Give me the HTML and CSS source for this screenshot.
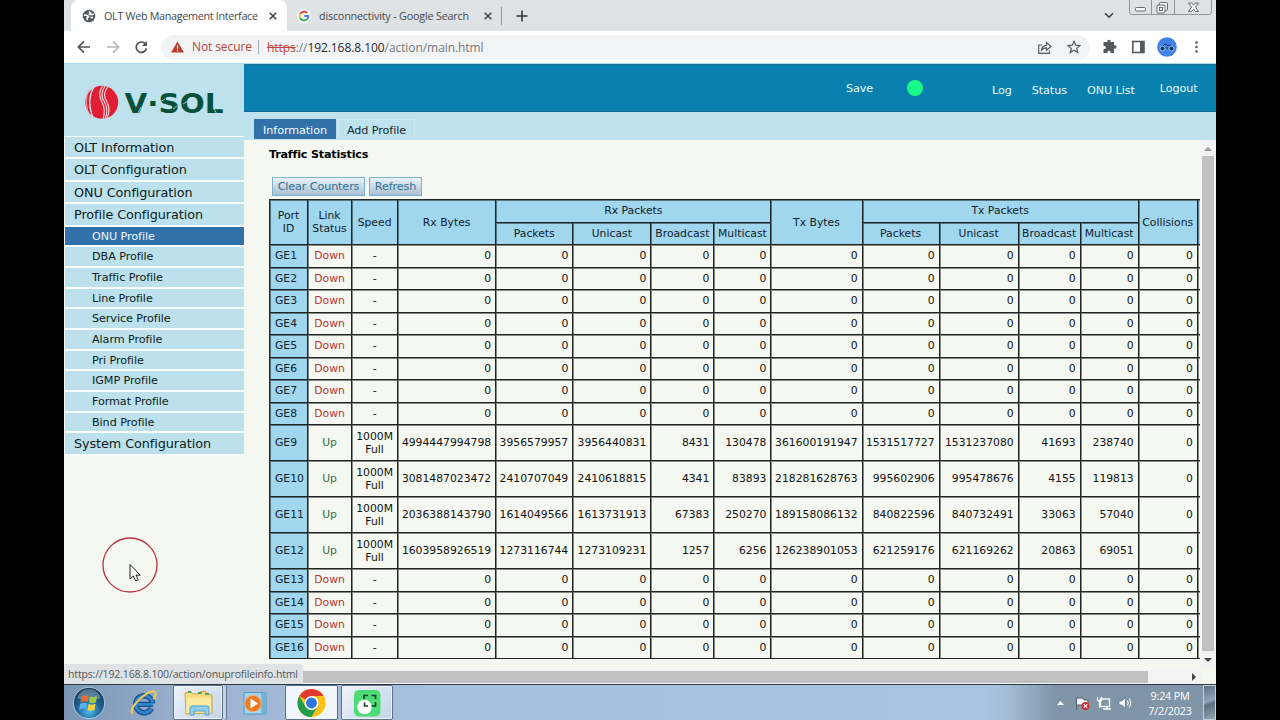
FILE: index.html
```html
<!DOCTYPE html>
<html lang="en">
<head>
  <meta charset="UTF-8">
  <meta name="viewport" content="width=device-width, initial-scale=1.0">
  <title>OLT Web Management Interface</title>
  <link rel="stylesheet" href="styles.css">
</head>
<body>
<div class="screen">

  <!-- Browser tabs -->
  <div class="tab-strip">
    <div class="tab active">
      <svg class="favicon" viewBox="0 0 14 14"><circle cx="7" cy="7" r="6.3" fill="#565b60"/><path d="M2 6 L5 6.500 L6.500 8 L5 9 L5.500 11 M7 2.500 L8.500 4 L7.500 5.500 L10.500 5.500 L12 5 M8.500 8.500 L11 8.500" stroke="#fff" stroke-width="1.500" fill="none"/></svg>
      <span class="tab-title t1">OLT Web Management Interface</span>
      <svg class="close" viewBox="0 0 8 8"><path d="M.7 .7 L7.3 7.3 M7.3 .7 L.7 7.3"/></svg>
    </div>
    <div class="tab">
      <svg class="favicon google" viewBox="0 0 14 14"><circle cx="7" cy="7" r="7" fill="#fff"/><g fill="none" stroke-width="2"><path d="M10.2 4 A4.4 4.4 0 0 0 3.1 5" stroke="#ea4335"/><path d="M3.1 5 A4.4 4.4 0 0 0 3.1 9" stroke="#fbbc05"/><path d="M3.1 9 A4.4 4.4 0 0 0 10 10.3" stroke="#34a853"/><path d="M10 10.3 A4.4 4.4 0 0 0 11.4 7 H7.2" stroke="#4285f4"/></g></svg>
      <span class="tab-title t2">disconnectivity - Google Search</span>
      <svg class="close" viewBox="0 0 8 8"><path d="M.7 .7 L7.3 7.3 M7.3 .7 L.7 7.3"/></svg>
    </div>
    <span class="tab-line"></span>
    <svg class="new-tab" viewBox="0 0 12 12"><path d="M6 .5 V11.5 M.5 6 H11.5"/></svg>
    <svg class="chevron" viewBox="0 0 10 7"><path d="M1 1.2 L5 5.2 L9 1.2"/></svg>
    <svg class="win-buttons" viewBox="0 0 84 16"><path d="M.5 0 V12 Q.5 14.5 3 14.5 H80 Q82.5 14.5 82.5 12 V0 M22.5 0 V14 M45.500 0 V14" fill="none" stroke="#8d949b"/><g fill="#f4f6f7" stroke="#555b61" stroke-width=".9"><rect x="6.500" y="7.500" width="10" height="3.500" rx="1"/><rect x="30.500" y="2.500" width="8" height="8" rx="1"/><rect x="28" y="5" width="8" height="8" rx="1"/><rect x="30.500" y="7.500" width="3" height="3"/><path d="M59.500 3 H62.500 L64.500 5.200 L66.500 3 H69.500 L66.500 7 L69.500 11.500 H66.500 L64.500 9.200 L62.500 11.500 H59.500 L62.500 7 Z"/></g></svg>
  </div>

  <!-- Address bar -->
  <div class="toolbar">
    <svg class="nav-icons" viewBox="0 0 74 14"><g fill="none" stroke-width="1.7"><path d="M13 7 H1.500 M7 1.300 L1.300 7 L7 12.700" stroke="#50555a"/><path d="M30 7 H41.500 M36 1.300 L41.700 7 L36 12.700" stroke="#b5b8bb"/><path d="M68.500 4 A5.200 5.200 0 1 0 69.500 8.300" stroke="#50555a"/></g><path d="M70 1 V6 H65 Z" fill="#50555a"/></svg>
    <div class="address">
      <svg class="warn" viewBox="0 0 14 12"><path d="M7 0 L14 12 H0 Z" fill="#bf3a2b"/><path d="M7 4 V8 M7 9 V10.500" stroke="#fff" stroke-width="1.300"/></svg>
      <span class="not-secure">Not secure</span>
      <span class="url"><span class="strike">https</span><span class="gray">://</span>192.168.8.100<span class="gray">/action/main.html</span></span>
      <svg class="share" viewBox="0 0 14 13"><path d="M4 4 H.7 V12.300 H11.500 V9.500 M3.500 9 Q4 4.500 8.500 4.300 V1.500 L13 5.500 L8.500 9.300 V6.800 Q5.500 6.700 3.500 9 Z"/></svg>
      <svg class="star" viewBox="0 0 14 14"><path d="M7 1.300 L8.700 5.200 L12.900 5.600 L9.700 8.400 L10.700 12.500 L7 10.300 L3.300 12.500 L4.300 8.400 L1.100 5.600 L5.300 5.200 Z"/></svg>
    </div>
    <svg class="tool-icons" viewBox="0 0 110 22"><path d="M7.500 6 H10.500 Q9.800 3.800 12 3.800 Q14.200 3.800 13.500 6 H17 V9.500 Q19.500 8.800 19.500 11 Q19.500 13.200 17 12.500 V17 H13.500 Q14 14.800 12 14.800 Q10 14.800 10.500 17 H6.500 V13 Q9 13.200 9 11.500 Q9 9.500 6.500 10 V6 Z" fill="#54595e"/><rect x="35.800" y="5.500" width="11" height="11" fill="#fff" stroke="#54595e" stroke-width="1.600"/><rect x="43" y="5" width="4.500" height="12" fill="#54595e"/><circle cx="70" cy="11" r="9.800" fill="#3f83ea"/><g fill="#16345e" stroke="#9dd0ff" stroke-width=".9"><circle cx="65.500" cy="12.500" r="2.500"/><circle cx="74.500" cy="12.500" r="2.500"/><path d="M66 10 L68 8 L72 10 L74 8.500 M69 12 H71" fill="none" stroke="#1f3150" stroke-width="1"/></g><g fill="#54595e"><circle cx="99.500" cy="6.500" r="1.300"/><circle cx="99.500" cy="11" r="1.300"/><circle cx="99.500" cy="15.500" r="1.300"/></g></svg>
  </div>

  <!-- OLT page -->
  <div class="page">
    <div class="sidebar">
      <div class="logo">
        <svg viewBox="0 0 180 72">
          <circle cx="37.800" cy="38.300" r="16.500" fill="#e01f34"/>
          <path d="M31 21 Q21 36 30 56" stroke="#bfe2ec" stroke-width="1.500" fill="none"/>
          <path d="M26 22 Q18 38 27 55" stroke="#f3b8c2" stroke-width=".9" fill="none"/>
          <path d="M41 22 Q35 31 40.500 38 Q45 46 41 55 M43.500 23 Q38 31 43 38 Q47 46 43 54 M38.500 22 Q33 30 38 38 Q42 46 39 55" stroke="#f8dce0" stroke-width="1.100" fill="none"/>
          <text x="60.500" y="49" textLength="99" lengthAdjust="spacingAndGlyphs">V·SOL</text>
          <path d="M74 49 L77 43 M96 38 L101 35 M109 45 L113 42 M119 40 L124 37 M136 47 L141 43 M150 45 L153 50" stroke="#bde2ed" stroke-width=".8"/>
        </svg>
      </div>
      <ul class="menu">
        <li>OLT Information</li>
        <li>OLT Configuration</li>
        <li>ONU Configuration</li>
        <li>Profile Configuration</li>
        <li class="sub current">ONU Profile</li>
        <li class="sub">DBA Profile</li>
        <li class="sub">Traffic Profile</li>
        <li class="sub">Line Profile</li>
        <li class="sub">Service Profile</li>
        <li class="sub">Alarm Profile</li>
        <li class="sub">Pri Profile</li>
        <li class="sub">IGMP Profile</li>
        <li class="sub">Format Profile</li>
        <li class="sub">Bind Profile</li>
        <li>System Configuration</li>
      </ul>
    </div>

    <div class="main">
      <div class="banner">
        <span class="save">Save</span>
        <span class="led"></span>
        <span class="link low">Log</span>
        <span class="link low">Status</span>
        <span class="link low">ONU List</span>
        <span class="link logout">Logout</span>
      </div>
      <div class="page-tabs">
        <span class="page-tab selected">Information</span>
        <span class="page-tab">Add Profile</span>
      </div>
      <div class="frame">
        <div class="content">
          <h1>Traffic Statistics</h1>
          <div class="buttons">
            <button class="clear">Clear Counters</button>
            <button class="refresh">Refresh</button>
          </div>
          <table class="stats">
            <colgroup>
              <col class="w38"><col class="w44"><col class="w46"><col class="w98">
              <col class="w77"><col class="w78"><col class="w63"><col class="w57"><col class="w91">
              <col class="w77"><col class="w79"><col class="w62"><col class="w58"><col class="w59"><col class="w77">
            </colgroup>
            <thead>
              <tr>
                <th rowspan="2">Port<br>ID</th>
                <th rowspan="2">Link<br>Status</th>
                <th rowspan="2">Speed</th>
                <th rowspan="2">Rx Bytes</th>
                <th colspan="4">Rx Packets</th>
                <th rowspan="2">Tx Bytes</th>
                <th colspan="4">Tx Packets</th>
                <th rowspan="2">Collisions</th>
                <th rowspan="2"></th>
              </tr>
              <tr>
                <th>Packets</th><th>Unicast</th><th>Broadcast</th><th>Multicast</th>
                <th>Packets</th><th>Unicast</th><th>Broadcast</th><th>Multicast</th>
              </tr>
            </thead>
            <tbody id="ports"></tbody>
          </table>
        </div>
        <div class="vscroll">
          <span class="arrow up"></span>
          <span class="thumb"></span>
          <span class="arrow down"></span>
        </div>
      </div>
      <div class="hscroll">
        <span class="thumb"></span>
        <span class="arrow right"></span>
      </div>
    </div>

    <div class="status-bubble">https://192.168.8.100/action/onuprofileinfo.html</div>
    <svg class="pointer" viewBox="0 0 56 56"><circle cx="28" cy="28" r="27" fill="none" stroke="#b8323f" stroke-width="1.300"/><path d="M28 27.500 V42 L31.300 39 L33.800 44 L36.300 42.800 L34 38.200 H38.300 Z" fill="#fff" stroke="#222" stroke-width="1"/></svg>
  </div>

  <!-- Windows taskbar -->
  <div class="taskbar">
    <div class="task orb">
      <svg viewBox="0 0 34 34"><defs><radialGradient id="orb" cx=".5" cy=".75" r=".7"><stop offset="0" stop-color="#4cc0ee"/><stop offset=".5" stop-color="#21659a"/><stop offset="1" stop-color="#1c3854"/></radialGradient></defs><circle cx="17" cy="17" r="15.800" fill="url(#orb)" stroke="#b6cbdc"/><path d="M5 12 Q9 3 17 3 Q25 3 29 12 Q17 17 5 12" fill="#9fbdd0" opacity=".45"/><path d="M9.500 10.500 Q13 8.500 16.500 10 L15.500 16 Q12 14.500 8.500 16.500 Z" fill="#ee6b2d"/><path d="M18 10.500 Q21.500 12 25 10 L24 16.300 Q20.500 18 17 16.500 Z" fill="#9fcb45"/><path d="M8 18 Q11.500 16 15 17.500 L14 23.500 Q10.500 22 7 24 Z" fill="#54b0ee"/><path d="M16.600 18 Q20 19.500 23.600 17.800 L22.500 24 Q19 25.500 15.600 24 Z" fill="#fdd23f"/></svg>
    </div>
    <div class="task">
      <svg viewBox="0 0 34 34"><path d="M27.500 18.500 H10.500 M27 17.500 A9.300 9.300 0 1 0 25.800 23" fill="none" stroke="#174f92" stroke-width="6"/><path d="M27.500 18.500 H10.500 M27 17 A9.300 9.300 0 1 0 25.800 23" fill="none" stroke="#2f86cc" stroke-width="3"/><path d="M5 29 Q1 24 13 12.500 Q28 0 30 6 Q31 8 28 13" fill="none" stroke="#f1ca55" stroke-width="2.300"/></svg>
    </div>
    <div class="task open">
      <svg viewBox="0 0 34 34"><path d="M4 7 L9 5 L12 8 H18 L20 5.500 H25 L27 8 L31 9 V27 L5 28 Z" fill="#f5dc7d" stroke="#c9a449"/><path d="M5 12 H30 V27 H5 Z" fill="#faeaa0"/><path d="M7 6 H10 M17 7 H21 M24 8 H28" stroke="#55a05b" stroke-width="2"/><path d="M9 29 V22 Q9 20 11 20 H26 Q28 20 28 22 V29 H24 V25 H13 V29 Z" fill="#8cd0ef" stroke="#569dc5"/></svg>
    </div>
    <div class="task wmp">
      <svg viewBox="0 0 34 34"><path d="M12 7 H29 V28 H12 Z" fill="#9bcbe7" stroke="#539cc4"/><path d="M7 6.500 H25 V28 H7 Z" fill="#a5d4ee" stroke="#529dc8"/><path d="M27 8 V27" stroke="#4d91ba"/><circle cx="16" cy="17.500" r="8.200" fill="#ed7926" stroke="#f6b06c"/><path d="M13.500 12.500 L21 17.500 L13.500 22.500 Z" fill="#fff"/></svg>
    </div>
    <div class="task open chrome">
      <svg viewBox="0 0 34 34"><circle cx="17" cy="17" r="14.500" fill="#fbc116"/><path d="M17 17 L4.450 9.750 A14.500 14.500 0 0 1 29.550 9.750 H17 Z" fill="#e33b2e"/><path d="M4.450 9.750 A14.500 14.500 0 0 0 17 31.500 L23.300 20.600 L17 17 L10.700 20.600 Z" fill="#259b4a"/><circle cx="17" cy="17" r="7.200" fill="#fff"/><circle cx="17" cy="17" r="5.600" fill="#2f74df"/></svg>
    </div>
    <div class="task open recorder">
      <svg viewBox="0 0 34 34"><rect x="4" y="4" width="26.500" height="26.500" rx="5" fill="#4cdb74"/><circle cx="14.500" cy="21" r="7.300" fill="#fff"/><path d="M14 13 V9.500 H18 M21.500 9.500 H25.500 V13 M25.500 16 V20 H21.500 M18 20 H14.500 V16.500" fill="none" stroke="#174825" stroke-width="1.700"/></svg>
    </div>
    <div class="tray">
      <svg class="tray-icons" viewBox="0 0 80 18"><path d="M1 11 L4.500 7 L8 11 Z" fill="#fff"/><path d="M20.500 3 V16 M21 4 H27 L28 6 H32 V11 H21" fill="#f2f5f7" stroke="#52606c"/><circle cx="29.500" cy="12" r="3.900" fill="#cc2f2d"/><path d="M27.800 10.300 L31.200 13.700 M31.200 10.300 L27.800 13.700" stroke="#fff" stroke-width="1.200"/><rect x="44.500" y="5" width="9" height="7.500" fill="#8295a3" stroke="#fff" stroke-width="1.300"/><path d="M47 15 H55 M51 12.500 V15 M41.500 3 V6 Q43.500 8 45.500 6 V3 M43.500 7 V14" stroke="#fff" stroke-width="1.300" fill="none"/><path d="M63 7 H66 L69.500 3.500 V14.500 L66 11 H63 Z" fill="#fff" stroke="#637482" stroke-width=".7"/><path d="M71.500 6.500 Q73 9 71.500 11.500 M73.500 4.500 Q76 9 73.500 13.500" fill="none" stroke="#fff"/></svg>
      <div class="clock"><span>9:24 PM</span><span>7/2/2023</span></div>
      <span class="show-desktop"></span>
    </div>
  </div>
</div>

<script>
  // speed, rx bytes, rx packets x4, tx bytes, tx packets x4 for the ports that are up
  const upPorts = {
    9: [4994447994798, 3956579957, 3956440831, 8431, 130478, 361600191947, 1531517727, 1531237080, 41693, 238740, 0],
    10: [3081487023472, 2410707049, 2410618815, 4341, 83893, 218281628763, 995602906, 995478676, 4155, 119813, 0],
    11: [2036388143790, 1614049566, 1613731913, 67383, 250270, 189158086132, 840822596, 840732491, 33063, 57040, 0],
    12: [1603958926519, 1273116744, 1273109231, 1257, 6256, 126238901053, 621259176, 621169262, 20863, 69051, 0]
  };

  let rows = "";
  for (let i = 1; i <= 16; i++) {
    const up = upPorts[i];
    const values = up || Array(11).fill(0);
    rows += `<tr class="${up ? "tall" : ""}"><th class="port">GE${i}</th>`;
    rows += up ? `<td class="mid up-link">Up</td><td class="mid">1000M<br>Full</td>`
               : `<td class="mid down-link">Down</td><td class="mid">-</td>`;
    rows += values.map(v => `<td>${v}</td>`).join("") + "<td></td></tr>";
  }
  document.getElementById("ports").innerHTML = rows;
</script>
</body>
</html>
```
FILE: styles.css
```css
* {
  box-sizing: border-box;
}

body {
  margin: 0;
  background: #000;
  overflow: hidden;
  font-family: "DejaVu Sans", Verdana, sans-serif;
}

svg {
  display: block;
  flex: none;
}

.screen {
  width: 1152px;
  height: 720px;
  margin: 0 auto;
  display: flex;
  flex-direction: column;
  overflow: hidden;
}

/* Browser tabs */
.tab-strip {
  height: 31px;
  flex: none;
  display: flex;
  align-items: center;
  background: #dee2e5;
  padding-left: 7px;
  font-family: "Open Sans", sans-serif;
  font-size: 10.800px;
  color: #43484d;
}

.tab {
  display: flex;
  align-items: center;
  height: 31px;
  width: 209px;
  padding-left: 10px;
}

.tab.active {
  width: 216px;
  padding-left: 11px;
  background: #fff;
  border-radius: 8px 8px 0 0;
}

.favicon {
  width: 14px;
  height: 14px;
  margin-right: 8px;
}

.tab-title {
  white-space: nowrap;
  width: 165px;
  letter-spacing: -0.2px;
}

.t1 {
  letter-spacing: -0.32px;
}

.close {
  width: 8px;
  height: 8px;
}

.close path {
  stroke: #3c4043;
  stroke-width: 1.5;
}

.tab-line {
  width: 1px;
  height: 18px;
  background: #8d9296;
  margin-left: 5px;
  margin-right: 14px;
}

.new-tab {
  width: 12px;
  height: 12px;
}

.new-tab path {
  stroke: #33373b;
  stroke-width: 1.6;
}

.chevron {
  width: 10px;
  height: 7px;
  margin-left: auto;
  margin-right: 15px;
}

.chevron path {
  fill: none;
  stroke: #3c4043;
  stroke-width: 1.6;
}

.win-buttons {
  width: 84px;
  height: 16px;
  align-self: flex-start;
  margin-right: 3px;
}

/* Address bar */
.toolbar {
  height: 33px;
  flex: none;
  display: flex;
  align-items: center;
  background: #fff;
  border-bottom: 1px solid #a5dfee;
  padding-left: 13px;
  font-family: "Open Sans", sans-serif;
  font-size: 12px;
}

.nav-icons {
  width: 74px;
  height: 14px;
}

.address {
  width: 929px;
  height: 25px;
  margin-left: 10px;
  border-radius: 13px;
  background: #f1f3f4;
  display: flex;
  align-items: center;
  padding: 0 9px 0 10px;
}

.warn {
  width: 13px;
  height: 12px;
}

.not-secure {
  color: #b6483c;
  margin-left: 8px;
  width: 67px;
  height: 14px;
  line-height: 13px;
  letter-spacing: -0.1px;
  white-space: nowrap;
  border-right: 1px solid #a6aaad;
}

.url {
  margin-left: 8px;
  color: #26292c;
  letter-spacing: -0.07px;
  white-space: nowrap;
}

.strike {
  color: #c5453a;
  text-decoration: line-through;
}

.gray {
  color: #73777b;
}

.share {
  width: 14px;
  height: 13px;
  margin-left: auto;
  margin-right: 15px;
}

.star {
  width: 14px;
  height: 14px;
}

.share path,
.star path {
  fill: none;
  stroke: #54595e;
  stroke-width: 1.2;
}

.tool-icons {
  width: 110px;
  height: 22px;
  margin-left: 7px;
}

/* OLT page */
.page {
  position: relative;
  flex: none;
  height: 620px;
  display: flex;
  background: #f4f8f0;
}

.sidebar {
  width: 180px;
  flex: none;
}

.logo {
  height: 72.500px;
  background: #bde2ed;
  border-bottom: 1px solid #f8fcfb;
}

.logo svg {
  width: 180px;
  height: 72px;
}

.logo text {
  font-family: "DejaVu Sans", sans-serif;
  font-weight: bold;
  font-size: 27px;
  fill: #06513c;
}

.menu {
  list-style: none;
  margin: 0;
  padding: 0 0 0 1px;
}

.menu li {
  height: 22.500px;
  line-height: 21.600px;
  padding-left: 9px;
  background: #bce1ec;
  border-bottom: 2px solid #f8fcfb;
  font-size: 12.800px;
  letter-spacing: -0.08px;
  color: #0c1c20;
  white-space: nowrap;
}

.menu .sub {
  height: 20.700px;
  line-height: 19.600px;
  padding-left: 27px;
  font-size: 11.200px;
}

.menu .current {
  background: #3371ab;
  color: #eef8fc;
}

.main {
  flex: 1;
  min-width: 0;
  display: flex;
  flex-direction: column;
}

.banner {
  height: 48px;
  flex: none;
  display: flex;
  background: #0a80ae;
  border-top: 1px solid #1a7294;
  border-bottom: 1px solid #0b6f99;
  color: #e6fbfd;
  font-size: 11.200px;
  letter-spacing: -0.08px;
  line-height: 14px;
  white-space: nowrap;
  padding-top: 17px;
}

.save {
  width: 61px;
  margin-left: 602px;
}

.led {
  width: 16px;
  height: 16px;
  margin: -2px 69px 0 0;
  border-radius: 50%;
  background: #16fb85;
}

.link {
  margin-right: 20px;
}

.low {
  padding-top: 2px;
}

.logout {
  margin: 0 0 0 5px;
}

.page-tabs {
  height: 28px;
  flex: none;
  display: flex;
  background: #bee3ee;
  padding: 7px 0 0 10px;
  gap: 2px;
  font-size: 11.200px;
  letter-spacing: -0.08px;
  line-height: 21px;
}

.page-tab {
  width: 77px;
  height: 20px;
  text-align: center;
  white-space: nowrap;
  border: 1px solid #cdeaf0;
  border-bottom: none;
  color: #14262e;
}

.page-tab.selected {
  width: 82px;
  border-color: #3371ab;
  background: #3371ab;
  color: #f0fbfd;
}

.frame {
  flex: 1;
  min-height: 0;
  display: flex;
  justify-content: space-between;
}

.content {
  width: 956px;
  padding: 7px 0 0 25px;
  overflow: hidden;
}

.content h1 {
  margin: 0;
  font-size: 11.200px;
  line-height: 15px;
  letter-spacing: -0.2px;
  color: #000;
}

.buttons {
  display: flex;
  gap: 4px;
  padding: 15px 0 3px 3px;
}

.buttons button {
  height: 19px;
  padding: 0;
  border: 1px solid #7bb0cf;
  background: linear-gradient(#e9f2f6, #c3d5e2 60%, #a9c0d3);
  font-family: inherit;
  font-size: 11.200px;
  letter-spacing: -0.12px;
  line-height: 17px;
  color: #337296;
  white-space: nowrap;
}

.buttons .clear {
  width: 93px;
}

.buttons .refresh {
  width: 53px;
}

/* Port statistics */
.stats {
  width: 1006px;
  table-layout: fixed;
  border-collapse: collapse;
  font-size: 10.800px;
  line-height: 13px;
  color: #111;
}

.stats tr {
  height: 22.500px;
}

.stats .tall {
  height: 36px;
}

.stats th,
.stats td {
  border: 1px solid #202524;
  box-shadow: inset 1px 1px rgba(0, 0, 0, 0.45);
  padding: 0 4px 0 0;
  text-align: right;
  white-space: nowrap;
}

.stats th {
  background: #a0d6ee;
  font-weight: normal;
  text-align: center;
  color: #12232c;
  padding: 0;
}

.stats .port {
  text-align: left;
  padding-left: 5px;
}

.stats .mid {
  text-align: center;
  padding: 0;
}

.stats .down-link {
  color: #bd3434;
}

.stats .up-link {
  color: #3a6b43;
}

.w38 { width: 38px; }
.w44 { width: 44px; }
.w46 { width: 46px; }
.w57 { width: 57px; }
.w58 { width: 58px; }
.w59 { width: 59px; }
.w62 { width: 62px; }
.w63 { width: 63px; }
.w77 { width: 77px; }
.w78 { width: 78px; }
.w79 { width: 79px; }
.w91 { width: 91px; }
.w98 { width: 98px; }

/* Scrollbars */
.vscroll {
  width: 15px;
  background: #f2f3f2;
  display: flex;
  flex-direction: column;
  align-items: center;
  padding: 7px 1px 7px 0;
}

.vscroll .thumb {
  flex: 1;
  width: 12px;
  margin: 5px 0 7px;
  background: #c1c1c1;
}

.arrow {
  border: 4px solid transparent;
}

.arrow.up {
  border-top: none;
  border-bottom-color: #9a9a9a;
}

.arrow.down {
  border-bottom: none;
  border-top-color: #444;
}

.arrow.right {
  border-right: none;
  border-left-color: #444;
}

.hscroll {
  height: 15px;
  flex: none;
  margin-right: 15px;
  background: #f2f3f2;
  display: flex;
  align-items: center;
  justify-content: space-between;
  padding-right: 5px;
}

.hscroll .thumb {
  width: 904px;
  height: 12px;
  background: #c1c1c1;
}

.status-bubble {
  position: absolute;
  left: 0;
  bottom: 0;
  width: 239px;
  height: 20px;
  padding-left: 4px;
  border-radius: 0 4px 0 0;
  background: #dfe3e6;
  font-family: "Open Sans", sans-serif;
  font-size: 10.500px;
  letter-spacing: -0.15px;
  line-height: 21px;
  color: #50555a;
  white-space: nowrap;
}

.pointer {
  position: absolute;
  left: 38px;
  top: 473px;
  width: 56px;
  height: 56px;
}

/* Windows taskbar */
.taskbar {
  flex: none;
  height: 36px;
  display: flex;
  border-top: 1px solid #2c3a48;
  background: linear-gradient(to right, #7994b2, #9db5d2 12%, #a6bfdc 30%, #a9c3e1 80%, #a3bbd5 82%, #8095a8 86%, #8095a8);
}

.task {
  width: 52px;
  height: 35px;
  margin-right: 4px;
  display: flex;
  align-items: center;
  justify-content: center;
}

.task svg {
  width: 34px;
  height: 34px;
}

.orb {
  width: 49px;
}

.task:nth-child(2) svg {
  width: 31px;
}

.open {
  border: 1px solid #5d7286;
  border-radius: 2px;
  background: linear-gradient(135deg, #eef3fa, #c3d3e8);
  box-shadow: inset 0 0 0 1px #eef4fb;
}

.open:nth-child(3) {
  width: 50px;
  box-shadow: inset 0 0 0 1px #eef4fb, 3px 0 0 #c3d4e8, 4px 0 0 #61778d;
}

.wmp {
  width: 54px;
}

.chrome {
  width: 53px;
  background: #f1f6fd;
  margin-right: 3px;
}

.chrome svg {
  width: 33px;
}

.tray {
  margin-left: auto;
  display: flex;
  align-items: center;
}

.tray-icons {
  width: 80px;
  height: 18px;
  margin-right: 4px;
}

.clock {
  width: 60px;
  margin-right: 3px;
  display: flex;
  flex-direction: column;
  text-align: center;
  font-family: "Open Sans", sans-serif;
  font-size: 10.800px;
  line-height: 15px;
  letter-spacing: -0.2px;
  color: #fff;
}

.show-desktop {
  width: 13px;
  height: 35px;
  border: 1px solid #c5d1da;
  background: linear-gradient(160deg, #5d7183, #8fa4b5 45%, #5b6f80 55%, #91a5b4);
}
```
